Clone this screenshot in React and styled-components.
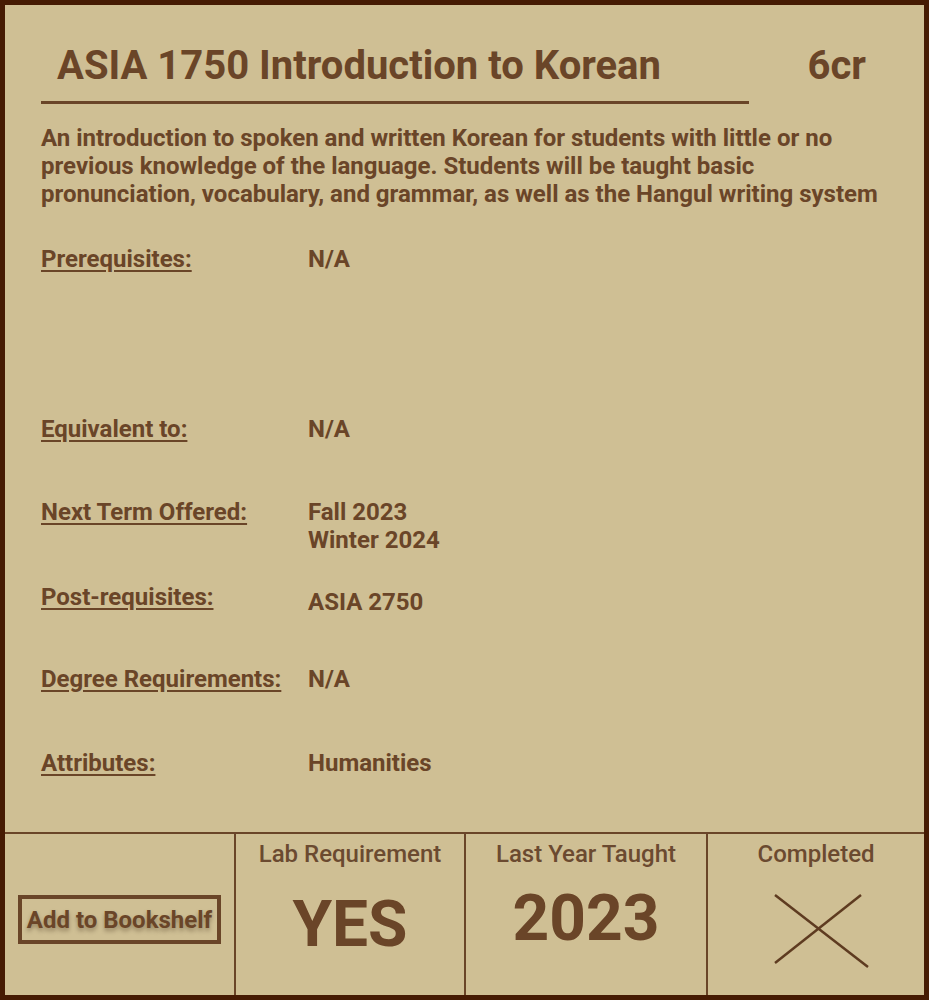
import React from 'react';
import styled, { createGlobalStyle } from 'styled-components';

const ink = '#6a4528';
const edge = '#461b03';
const paper = '#cfbf94';

const Global = createGlobalStyle`
  html, body { margin: 0; padding: 0; background: ${paper}; }
  body { font-family: Roboto, "Liberation Sans", sans-serif; color: ${ink}; }
`;

const Card = styled.div`
  box-sizing: border-box;
  width: 929px;
  height: 1000px;
  border: 5px solid ${edge};
  background: ${paper};
  display: flex;
  flex-direction: column;
`;

const Main = styled.section`
  flex: 1;
  padding: 41px 0 0 36px;
`;

const TitleRow = styled.div`
  display: flex;
  align-items: flex-start;
  justify-content: space-between;
  padding-right: 58px;
`;

const Title = styled.h1`
  margin: 0;
  padding-left: 16px;
  font-size: 40px;
  line-height: 40px;
  font-weight: 700;
`;

const Rule = styled.hr`
  width: 708px;
  height: 3px;
  margin: 15px 0 0;
  border: 0;
  background: ${ink};
`;

const Desc = styled.p`
  width: 850px;
  margin: 20px 0 0;
  font-size: 24px;
  line-height: 28px;
  font-weight: 700;
`;

const Rows = styled.div`
  margin-top: 37px;
`;

const Row = styled.div`
  display: grid;
  grid-template-columns: 267px 1fr;
  height: ${p => p.$h}px;
  font-size: 24px;
  line-height: 28px;
  font-weight: 700;
`;

const Label = styled.span`
  text-decoration: underline;
  text-underline-offset: 3px;
`;

const Value = styled.div`
  padding-top: ${p => p.$dy || 0}px;
`;

const Footer = styled.div`
  box-sizing: border-box;
  height: 163px;
  border-top: 2px solid ${ink};
  display: grid;
  grid-template-columns: 229px 230px 242px 1fr;
`;

const Cell = styled.div`
  box-sizing: border-box;
  border-left: ${p => (p.$first ? 'none' : `2px solid ${ink}`)};
  display: flex;
  flex-direction: column;
  align-items: center;
  padding-top: 6px;
`;

const CellHead = styled.div`
  font-size: 24px;
  line-height: 28px;
  font-weight: 500;
  color: #6b4a30;
`;

const Big = styled.div`
  margin-top: ${p => p.$top}px;
  font-size: 64px;
  line-height: 64px;
  font-weight: 700;
`;

const ShelfButton = styled.button`
  box-sizing: border-box;
  width: 203px;
  height: 49px;
  margin-top: 55px;
  border: 4px solid ${ink};
  background: transparent;
  color: ${ink};
  font-family: Roboto, "Liberation Sans", sans-serif;
  font-size: 24px;
  font-weight: 700;
  padding: 0;
  white-space: nowrap;
  text-shadow: 0 3px 4px rgba(40, 20, 0, 0.35);
`;

const Cross = styled.svg`
  margin: 25px 0 0 10px;
`;

const rows = [
  { label: 'Prerequisites:', value: ['N/A'], h: 170 },
  { label: 'Equivalent to:', value: ['N/A'], h: 83 },
  { label: 'Next Term Offered:', value: ['Fall 2023', 'Winter 2024'], h: 85 },
  { label: 'Post-requisites:', value: ['ASIA 2750'], h: 82, dy: 5 },
  { label: 'Degree Requirements:', value: ['N/A'], h: 84 },
  { label: 'Attributes:', value: ['Humanities'], h: 40 },
];

export default function App() {
  return (
    <>
      <Global />
      <Card>
        <Main>
          <TitleRow>
            <Title>ASIA 1750 Introduction to Korean</Title>
            <Title>6cr</Title>
          </TitleRow>
          <Rule />
          <Desc>
            An introduction to spoken and written Korean for students with little or no
            previous knowledge of the language. Students will be taught basic
            pronunciation, vocabulary, and grammar, as well as the Hangul writing system
          </Desc>
          <Rows>
            {rows.map(r => (
              <Row key={r.label} $h={r.h}>
                <div><Label>{r.label}</Label></div>
                <Value $dy={r.dy}>
                  {r.value.map(v => <div key={v}>{v}</div>)}
                </Value>
              </Row>
            ))}
          </Rows>
        </Main>
        <Footer>
          <Cell $first>
            <ShelfButton>Add to Bookshelf</ShelfButton>
          </Cell>
          <Cell>
            <CellHead>Lab Requirement</CellHead>
            <Big $top={25}>YES</Big>
          </Cell>
          <Cell>
            <CellHead>Last Year Taught</CellHead>
            <Big $top={19}>2023</Big>
          </Cell>
          <Cell>
            <CellHead>Completed</CellHead>
            <Cross width="100" height="76" viewBox="0 0 100 76">
              <line x1="4" y1="2" x2="97" y2="74" stroke="#5e3b20" strokeWidth="2.5" />
              <line x1="90" y1="2" x2="4" y2="70" stroke="#5e3b20" strokeWidth="2.5" />
            </Cross>
          </Cell>
        </Footer>
      </Card>
    </>
  );
}
